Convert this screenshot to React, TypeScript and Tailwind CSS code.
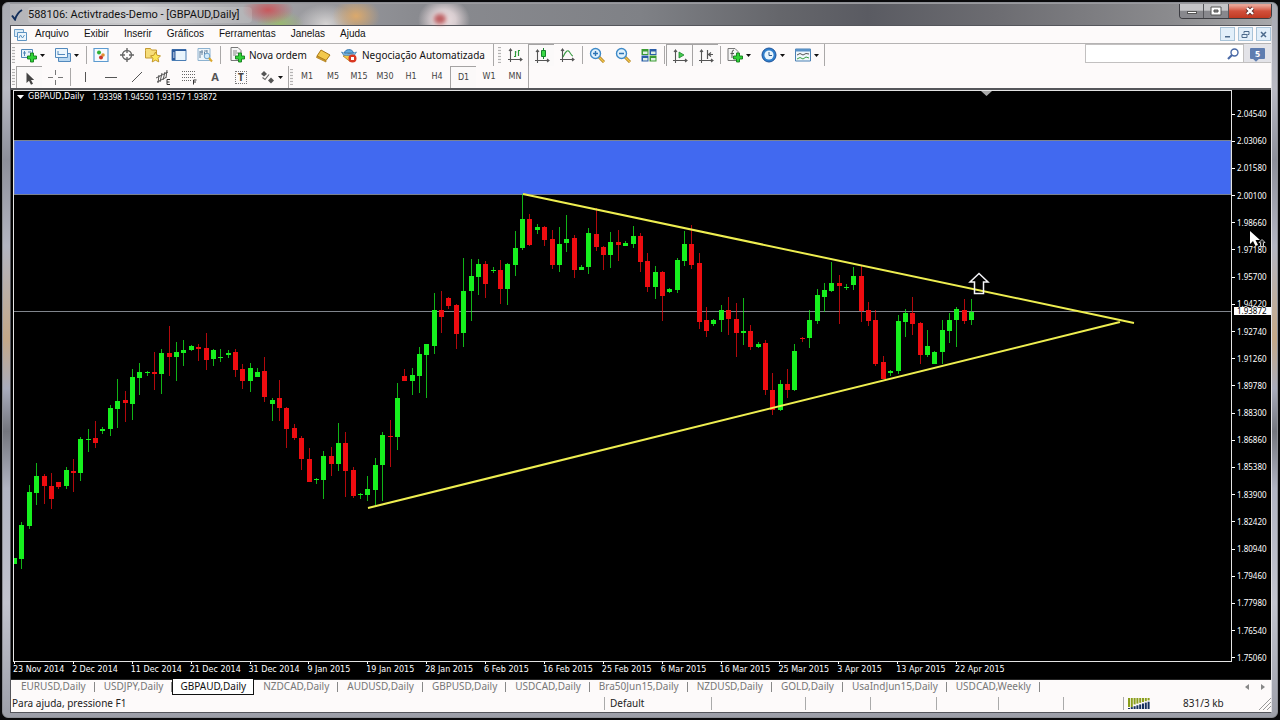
import type { ReactNode } from "react";

type Candle = [number, number, number, number, "g" | "r"];

// high, body top, body bottom, low (plot coordinates)
const candles: Candle[] = [
  [558, 558, 564, 564, "g"], [522, 525, 559, 569, "g"], [485, 492, 526, 529, "g"], [463, 476, 493, 505, "g"],
  [474, 476, 486, 504, "r"], [473, 486, 499, 509, "r"], [482, 482, 487, 489, "r"], [467, 470, 486, 489, "g"],
  [459, 471, 473, 492, "r"], [437, 439, 473, 481, "g"], [429, 439, 440, 452, "g"], [421, 438, 443, 448, "r"],
  [427, 429, 431, 434, "g"], [405, 408, 429, 436, "g"], [379, 401, 409, 428, "g"], [391, 400, 403, 422, "r"],
  [369, 377, 404, 420, "g"], [363, 372, 378, 395, "g"], [371, 372, 373, 376, "g"], [352, 372, 374, 390, "r"],
  [349, 353, 374, 394, "g"], [326, 353, 357, 376, "r"], [342, 352, 357, 381, "g"], [340, 350, 353, 366, "g"],
  [345, 346, 350, 351, "g"], [344, 347, 349, 361, "r"], [333, 348, 360, 370, "r"], [349, 350, 359, 366, "g"],
  [349, 357, 358, 362, "g"], [350, 353, 355, 358, "g"], [349, 352, 370, 377, "r"], [364, 369, 381, 389, "r"],
  [363, 368, 381, 392, "g"], [368, 372, 377, 377, "g"], [357, 371, 397, 402, "r"], [398, 400, 404, 421, "g"],
  [380, 398, 408, 421, "r"], [407, 408, 429, 448, "r"], [424, 428, 438, 440, "r"], [436, 438, 459, 470, "r"],
  [448, 459, 482, 482, "r"], [478, 479, 480, 484, "g"], [451, 456, 480, 499, "g"], [447, 456, 464, 476, "r"],
  [423, 443, 464, 471, "g"], [432, 443, 471, 497, "r"], [467, 470, 496, 498, "r"], [493, 494, 495, 499, "g"],
  [476, 489, 495, 501, "g"], [458, 465, 490, 505, "g"], [432, 435, 465, 501, "g"], [420, 436, 437, 467, "r"],
  [383, 398, 437, 450, "g"], [369, 376, 381, 381, "r"], [368, 375, 381, 395, "g"], [347, 354, 376, 393, "g"],
  [344, 344, 355, 398, "g"], [293, 310, 346, 354, "g"], [291, 310, 317, 333, "r"], [297, 298, 306, 309, "r"],
  [304, 305, 334, 349, "r"], [258, 291, 333, 347, "g"], [259, 276, 291, 321, "g"], [259, 264, 277, 295, "g"],
  [261, 264, 284, 298, "r"], [267, 270, 271, 273, "g"], [260, 270, 289, 304, "r"], [263, 264, 289, 305, "g"],
  [231, 248, 265, 276, "g"], [194, 219, 248, 250, "g"], [214, 219, 245, 246, "r"], [224, 227, 230, 234, "g"],
  [226, 227, 240, 246, "r"], [230, 239, 265, 269, "r"], [227, 244, 265, 272, "g"], [215, 239, 243, 252, "g"],
  [235, 238, 270, 278, "r"], [265, 267, 270, 270, "g"], [228, 233, 267, 274, "g"], [208, 234, 247, 251, "r"],
  [246, 247, 255, 270, "r"], [232, 242, 255, 268, "g"], [230, 242, 245, 261, "r"], [241, 243, 246, 246, "g"],
  [226, 236, 244, 248, "g"], [233, 236, 262, 272, "r"], [253, 261, 287, 292, "r"], [266, 272, 287, 299, "g"],
  [271, 272, 296, 321, "r"], [288, 289, 292, 293, "g"], [258, 260, 290, 293, "g"], [231, 244, 261, 266, "g"],
  [225, 244, 265, 269, "r"], [253, 263, 322, 329, "r"], [307, 320, 331, 337, "r"], [319, 320, 324, 326, "g"],
  [305, 310, 320, 332, "g"], [297, 310, 319, 335, "r"], [303, 319, 333, 357, "r"], [298, 331, 333, 345, "g"],
  [325, 331, 347, 350, "r"], [342, 344, 347, 348, "g"], [340, 343, 390, 395, "r"], [373, 390, 410, 415, "r"],
  [380, 384, 410, 411, "g"], [369, 384, 390, 398, "r"], [344, 351, 390, 391, "g"], [337, 338, 339, 342, "r"],
  [310, 320, 338, 348, "g"], [289, 295, 321, 324, "g"], [283, 290, 297, 312, "g"], [262, 283, 291, 292, "g"],
  [275, 283, 286, 324, "r"], [284, 287, 288, 290, "g"], [267, 276, 285, 290, "g"], [265, 276, 311, 322, "r"],
  [302, 310, 321, 326, "r"], [310, 320, 364, 366, "r"], [356, 362, 379, 379, "r"], [370, 371, 373, 376, "g"],
  [315, 321, 371, 374, "g"], [309, 313, 322, 337, "g"], [297, 313, 324, 335, "r"], [322, 323, 355, 364, "r"],
  [330, 346, 355, 357, "g"], [351, 352, 364, 364, "g"], [320, 330, 352, 364, "g"], [313, 320, 331, 343, "g"],
  [307, 309, 320, 347, "g"], [299, 310, 321, 324, "r"], [299, 312, 320, 325, "g"],
];

const prices = [
  "2.04540", "2.03060", "2.01580", "2.00100", "1.98660", "1.97180", "1.95700", "1.94220", "1.92740", "1.91260",
  "1.89780", "1.88300", "1.86860", "1.85380", "1.83900", "1.82420", "1.80940", "1.79460", "1.77980", "1.76540", "1.75060",
];

const dates = [
  "23 Nov 2014", "2 Dec 2014", "11 Dec 2014", "21 Dec 2014", "31 Dec 2014", "9 Jan 2015", "19 Jan 2015", "28 Jan 2015",
  "6 Feb 2015", "16 Feb 2015", "25 Feb 2015", "6 Mar 2015", "16 Mar 2015", "25 Mar 2015", "3 Apr 2015", "13 Apr 2015", "22 Apr 2015",
];

const menus = ["Arquivo", "Exibir", "Inserir", "Gráficos", "Ferramentas", "Janelas", "Ajuda"];
const timeframes = ["M1", "M5", "M15", "M30", "H1", "H4", "D1", "W1", "MN"];
const tabs = [
  "EURUSD,Daily", "USDJPY,Daily", "GBPAUD,Daily", "NZDCAD,Daily", "AUDUSD,Daily", "GBPUSD,Daily",
  "USDCAD,Daily", "Bra50Jun15,Daily", "NZDUSD,Daily", "GOLD,Daily", "UsaIndJun15,Daily", "USDCAD,Weekly",
];

function Icon({ children }: { children: ReactNode }) {
  return (
    <svg viewBox="0 0 16 16" className="h-4 w-4 shrink-0" fill="none" aria-hidden="true">
      {children}
    </svg>
  );
}

function Caret() {
  return (
    <svg viewBox="0 0 5 3" className="h-[3px] w-[5px] shrink-0" aria-hidden="true">
      <path d="M0 0h5L2.5 3z" fill="#111" />
    </svg>
  );
}

function Plus() {
  return <path d="M9.500 6h3v3h3v3h-3v3h-3v-3h-3V9h3z" fill="#2fd336" stroke="#137a1c" strokeWidth=".9" />;
}

function Axes() {
  return <path d="M3.500 2v13M1 12.500h14M2 4l1.500-2L5 4M13 11l2 1.500-2 1.500" stroke="#555" strokeWidth="1.100" />;
}

function Tool({ label, pressed, children }: { label: string; pressed?: boolean; children: ReactNode }) {
  return (
    <button
      type="button"
      aria-label={label}
      className={`flex h-full w-[26px] shrink-0 items-center justify-center ${
        pressed ? "border-l border-t border-[#a5a3a3] bg-[#fbf9f9]" : ""
      }`}
    >
      {children}
    </button>
  );
}

function DropTool({ label, children }: { label: string; children: ReactNode }) {
  return (
    <button type="button" aria-label={label} className="flex h-full w-[34px] shrink-0 items-center gap-[3px] pl-[5px]">
      <Icon>{children}</Icon>
      <Caret />
    </button>
  );
}

function Sep() {
  return (
    <div className="flex h-full w-1 shrink-0 justify-center py-0.5">
      <div className="w-px bg-[#aaa8a8]" />
    </div>
  );
}

function Grip() {
  return (
    <div className="flex h-full w-[5px] shrink-0 justify-center py-[3px]">
      <div className="w-[3px] bg-[repeating-linear-gradient(#b5b3b3_0px_1px,#f4f2f2_1px_3px)]" />
    </div>
  );
}

function TitleBar() {
  return (
    <header className="flex h-[22px] shrink-0 items-start border-t border-[#9a9a9e] bg-[radial-gradient(ellipse_26px_22px_at_434px_16px,#f0e2e4_0%,#d8cdd0_45%,transparent_100%),radial-gradient(ellipse_26px_14px_at_258px_6px,#c8585c_0%,transparent_100%),radial-gradient(ellipse_24px_14px_at_270px_20px,#9ab872_0%,transparent_100%),radial-gradient(ellipse_24px_18px_at_346px_12px,#dba96c_0%,transparent_100%),radial-gradient(ellipse_30px_20px_at_316px_20px,#d5d3d3_0%,transparent_100%),linear-gradient(90deg,#b4b4b8_0%,#c8c8ca_10%,#a2a2a6_20%,#8a8b90_32%,#7f8186_50%,#65666b_61%,#5a5b62_68%,#6c6c71_78%,#8b8b8e_92%,#a8a8aa_100%)]">
      <div className="flex h-full flex-1 items-center gap-[5px] pl-px">
        <svg viewBox="0 0 12 12" className="h-3 w-3" fill="none" aria-hidden="true">
          <path d="M1 6.500l3 4Q6 4 11 1" stroke="#14305c" strokeWidth="2" />
        </svg>
        <h1 className="w-[224px] rounded bg-white/15 font-['Roboto',sans-serif] text-[11px] leading-4 text-[#111]">
          588106: Activtrades-Demo - [GBPAUD,Daily]
        </h1>
        <div className="ml-[177px] mt-2 h-2.5 w-3 rounded-full bg-[#bd5f62] blur-[2px]" />
      </div>
      <div className="flex h-[15px] overflow-hidden rounded-b border border-t-0 border-[#3d3d42]">
        <button type="button" aria-label="Minimizar" className="flex w-6 items-end justify-center border-r border-[#55555a] bg-linear-to-b from-[#c5c5c8] from-45% to-[#88888d] to-50% pb-1">
          <span className="h-[3px] w-2.5 border border-[#555] bg-white" />
        </button>
        <button type="button" aria-label="Restaurar" className="flex w-[25px] items-center justify-center border-r border-[#55555a] bg-linear-to-b from-[#c5c5c8] from-45% to-[#88888d] to-50%">
          <svg viewBox="0 0 12 10" className="h-2.5 w-3" aria-hidden="true">
            <path d="M1 1h10v8H1z" fill="#fff" stroke="#555" />
            <path d="M4 4h4v2H4z" fill="#888" stroke="#555" />
          </svg>
        </button>
        <button type="button" aria-label="Fechar" className="flex w-[42px] items-center justify-center bg-linear-to-b from-[#e8a294] from-10% via-[#d2503c] via-50% to-[#c03a22]">
          <svg viewBox="0 0 12 10" className="h-2.5 w-3" fill="none" aria-hidden="true">
            <path d="M3 2l6 6M9 2L3 8" stroke="#5b2a28" strokeWidth="4" />
            <path d="M3 2l6 6M9 2L3 8" stroke="#fff" strokeWidth="2.400" />
          </svg>
        </button>
      </div>
    </header>
  );
}

function MenuBar() {
  return (
    <nav className="flex h-[18px] shrink-0 items-center border-b border-[#b5b3b3] pb-px pl-0.5">
      <svg viewBox="0 0 14 13" className="mr-2 h-[13px] w-3.5" fill="none" aria-hidden="true">
        <path d="M1.500 1.500h9v7h-9z" fill="#dcecf8" stroke="#6f9fc8" />
        <path d="M4.500 4.500h9v8h-9z" fill="#eef6fc" stroke="#5d93c2" />
        <path d="M6 10l1.500-3 2 3 2-3" stroke="#5d93c2" />
      </svg>
      <ul className="flex gap-[15px] font-['Liberation_Sans',Arial,sans-serif] text-[10px] leading-4 text-[#111]">
        {menus.map((m) => (
          <li key={m}>
            <button type="button">{m}</button>
          </li>
        ))}
      </ul>
      <div className="ml-auto flex gap-[3px] text-[#4c6a8c]">
        <button type="button" aria-label="Minimizar gráfico" className="flex h-[14px] w-[15px] items-center justify-center border border-[#a8c3d8] bg-[#e2effa]">
          <svg viewBox="0 0 9 9" className="h-[9px] w-[9px]" aria-hidden="true"><path d="M2 6h5v1.500H2z" fill="currentColor" /></svg>
        </button>
        <button type="button" aria-label="Restaurar gráfico" className="flex h-[14px] w-[15px] items-center justify-center border border-[#a8c3d8] bg-[#e2effa]">
          <svg viewBox="0 0 9 9" className="h-[9px] w-[9px]" fill="none" stroke="currentColor" aria-hidden="true"><path d="M3 3.500V1.500h5v3H6.500M1 4.500h5v3H1z" /></svg>
        </button>
        <button type="button" aria-label="Fechar gráfico" className="flex h-[14px] w-[15px] items-center justify-center border border-[#a8c3d8] bg-[#e2effa]">
          <svg viewBox="0 0 9 9" className="h-[9px] w-[9px]" fill="none" stroke="currentColor" strokeWidth="1.500" aria-hidden="true"><path d="M2 2l5 5M7 2L2 7" /></svg>
        </button>
      </div>
    </nav>
  );
}

function MainToolbar() {
  return (
    <div className="flex h-[22px] shrink-0 items-center">
      <Grip />
      <DropTool label="Novo gráfico">
        <path d="M.5 2.500h11v8H.5z" fill="#e8f3fb" stroke="#4f86b8" />
        <path d="M3.500 4v5M2 6h3M7 5h3" stroke="#4f86b8" />
        <Plus />
      </DropTool>
      <DropTool label="Perfis">
        <path d="M3.500 6.500h12v8h-12z" fill="#b9d8f1" stroke="#5289bd" />
        <path d="M.5 1.500h12v9H.5z" fill="#edf6fc" stroke="#5289bd" />
        <path d="M3 4v4M3 7.500h7" stroke="#5289bd" />
      </DropTool>
      <Sep />
      <Tool label="Observação do mercado">
        <Icon>
          <path d="M1 1.500h14v13H1z" fill="#f5fafe" stroke="#5d9bd0" strokeWidth="1.200" />
          <circle cx="6" cy="5.500" r="2" fill="#2eb135" />
          <circle cx="10" cy="8" r="1.800" fill="#e09030" />
          <circle cx="8" cy="10.500" r="2" fill="#cc3a2c" />
        </Icon>
      </Tool>
      <Tool label="Janela de dados">
        <Icon>
          <circle cx="8" cy="8" r="4.500" stroke="#666" strokeWidth="1.400" />
          <path d="M8 1v5M8 10v5M1 8h5M10 8h5" stroke="#666" strokeWidth="1.400" />
        </Icon>
      </Tool>
      <Tool label="Navegador">
        <Icon>
          <path d="M.5 3.500V1.500h5l1 1.500h5v8H.5z" fill="#f6dd7a" stroke="#c49a32" />
          <path d="M10.500 5l1.700 3.300 3.300.5-2.400 2.500.7 3.600-3.300-1.700-3.300 1.700.7-3.600L5.500 8.800l3.300-.5z" fill="#fce65a" stroke="#bd8f22" strokeWidth=".9" />
        </Icon>
      </Tool>
      <Tool label="Terminal">
        <Icon>
          <path d="M1 2.500h14v11H1z" fill="#e9f4fc" stroke="#4a7db4" />
          <path d="M1 2.500h14v1.500H1zM1 4h3.500v9H1z" fill="#2b5a9c" />
          <path d="M2 6h1.500M2 8h1.500M2 10h1.500" stroke="#fff" />
        </Icon>
      </Tool>
      <Tool label="Testador de estratégia">
        <Icon>
          <path d="M1 1.500h12v12H1z" fill="#eef5fa" stroke="#8db2d0" />
          <path d="M3 4v7M5 3v5M7.500 5v4M10 3v5M3 5h3M7 4h3" stroke="#6685a2" />
          <circle cx="10" cy="9" r="2.800" fill="#d5ebfa" stroke="#6ea3cc" />
          <path d="M12 11l3 3.500" stroke="#dba82e" strokeWidth="2" />
        </Icon>
      </Tool>
      <Sep />
      <button type="button" className="flex h-full w-[88px] shrink-0 items-center gap-1 whitespace-nowrap pl-[7px] text-[10px] text-[#111]">
        <Icon>
          <path d="M2 .5h7l3 3v10H2z" fill="#f6f6f6" stroke="#777" />
          <path d="M4 4h4M4 6h6M4 8h3" stroke="#888" />
          <Plus />
        </Icon>
        Nova ordem
      </button>
      <Tool label="MetaEditor">
        <Icon>
          <path d="M6 3l9 5-4 5.500L2 9z" fill="#f3c84c" stroke="#a87716" />
          <path d="M2 9l9 4.500v1.500L1.500 10.500z" fill="#d99f2a" stroke="#a87716" strokeWidth=".7" />
        </Icon>
      </Tool>
      <button type="button" className="flex h-full w-[158px] shrink-0 items-center gap-[5px] whitespace-nowrap border-r border-[#aaa8a8] pl-[5px] text-[10px] text-[#111]">
        <Icon>
          <path d="M2 9l7-3 6 4-6 4.500z" fill="#f2c648" stroke="#b18122" strokeWidth=".8" />
          <path d="M3.500 6C3.500 2 11.500 1 12.500 6z" fill="#64ade0" stroke="#3777ac" />
          <path d="M.5 5q7 4 15 0l-2 3q-6 1-11 0z" fill="#93cbef" stroke="#3777ac" strokeWidth=".7" />
          <circle cx="11.500" cy="11.500" r="4" fill="#d93822" />
          <path d="M10 10h3v3h-3z" fill="#fff" />
        </Icon>
        Negociação Automatizada
      </button>
      <div className="w-[3px]" />
      <Grip />
      <Tool label="Gráfico de barras">
        <Icon>
          <Axes />
          <path d="M8.500 4v6M7 9.500h1.500M11.500 3v6M11.500 3.500H13M8.500 5h1" stroke="#2c9a3a" strokeWidth="1.200" />
        </Icon>
      </Tool>
      <Tool label="Candlesticks" pressed>
        <Icon>
          <Axes />
          <path d="M9.500 0v11" stroke="#16842a" />
          <path d="M7.500 2.500h4v6h-4z" fill="#39d845" stroke="#16842a" />
        </Icon>
      </Tool>
      <Tool label="Gráfico de linha">
        <Icon>
          <Axes />
          <path d="M4 10Q8 1 10.500 5T14 9" stroke="#3c9c46" strokeWidth="1.200" />
        </Icon>
      </Tool>
      <Sep />
      <Tool label="Ampliar">
        <Icon>
          <path d="M10 10l5 5" stroke="#a9781d" strokeWidth="3" />
          <path d="M10 10l5 5" stroke="#f2c64a" strokeWidth="1.500" />
          <circle cx="6.500" cy="6.500" r="5" fill="#e0f1fc" stroke="#3f8ac8" strokeWidth="1.400" />
          <path d="M4 6.500h5M6.500 4v5" stroke="#2d74b4" strokeWidth="1.400" />
        </Icon>
      </Tool>
      <Tool label="Reduzir">
        <Icon>
          <path d="M10 10l5 5" stroke="#a9781d" strokeWidth="3" />
          <path d="M10 10l5 5" stroke="#f2c64a" strokeWidth="1.500" />
          <circle cx="6.500" cy="6.500" r="5" fill="#e0f1fc" stroke="#3f8ac8" strokeWidth="1.400" />
          <path d="M4 6.500h5" stroke="#2d74b4" strokeWidth="1.400" />
        </Icon>
      </Tool>
      <Tool label="Organizar janelas">
        <Icon>
          <path d="M.5 2h7v6h-7zM8.500 8.500h7v6h-7z" fill="#3c9c34" />
          <path d="M8.500 2h7v6h-7zM.5 8.500h7v6h-7z" fill="#2b5ea8" />
          <path d="M2 4.500h4.500v2.500H2zM10 4.500h4.500v2.500H10zM2 11h4.500v2.500H2zM10 11h4.500v2.500H10z" fill="#dff0e4" />
        </Icon>
      </Tool>
      <Sep />
      <Tool label="Rolagem automática" pressed>
        <Icon>
          <Axes />
          <path d="M7 4l5 3-5 3z" fill="#43c94c" stroke="#1f8630" strokeWidth=".8" />
        </Icon>
      </Tool>
      <Tool label="Deslocamento" pressed>
        <Icon>
          <Axes />
          <path d="M9.500 2v9M15 6.500h-4M13 4.500l-2.500 2 2.500 2" stroke="#555" strokeWidth="1.200" />
        </Icon>
      </Tool>
      <Sep />
      <DropTool label="Indicadores">
        <path d="M1 1.500h7l3 3v9H1z" fill="#f4f4f4" stroke="#777" />
        <path d="M7 3Q5 3 5 6v5M3.500 6.500h3.500" stroke="#555" />
        <Plus />
      </DropTool>
      <DropTool label="Períodos">
        <circle cx="8" cy="8" r="7" fill="#2f7fcc" stroke="#1d539a" />
        <circle cx="8" cy="8" r="4.600" fill="#e9f5fd" />
        <path d="M8 5v3.500h3" stroke="#2c5c90" />
      </DropTool>
      <DropTool label="Modelos">
        <path d="M.5 2h15v12H.5z" fill="#f1f8fc" stroke="#4b80b4" />
        <path d="M.5 2h15v2.500H.5z" fill="#5992c8" />
        <path d="M2 8l3-1.500L8 8l3-1.500L14 7" stroke="#555" />
        <path d="M2 12l3-1.500L8 12l3-2 3 1" stroke="#39a044" />
      </DropTool>
      <div className="h-full w-px bg-[#aaa8a8]" />
      <div className="ml-auto flex h-[19px] self-start">
        <label className="flex w-[159px] items-center border border-[#c2c0c0] bg-white">
          <input type="text" aria-label="Pesquisar" className="min-w-0 flex-1 px-1 text-[10px] outline-none" />
          <svg viewBox="0 0 14 14" className="mr-[3px] h-3.5 w-3.5" fill="none" aria-hidden="true">
            <circle cx="8.500" cy="5.500" r="3.500" stroke="#4969a6" strokeWidth="1.400" />
            <path d="M6 8l-4 4" stroke="#4969a6" strokeWidth="2.200" />
          </svg>
        </label>
        <button type="button" aria-label="Mensagens" className="flex w-[27px] items-center justify-center border-b border-[#c2c0c0] bg-[#e3e3e8]">
          <span className="relative rounded-[1px] bg-[#5f7db0] px-[5px] text-[9px] font-bold leading-[11px] text-white">
            5
            <span className="absolute -bottom-0.5 left-1 h-1 w-1 rotate-45 bg-[#5f7db0]" />
          </span>
        </button>
      </div>
    </div>
  );
}

function DrawingToolbar() {
  return (
    <div className="flex h-[22px] shrink-0 items-center">
      <Grip />
      <Tool label="Cursor" pressed>
        <Icon><path d="M4.500 2.500v10.500l2.500-2.300 2 4 2-1-2-3.700h3.200z" fill="#444" /></Icon>
      </Tool>
      <Tool label="Mira">
        <Icon><path d="M8.500 1v5M8.500 11v5M1 8.500h5M11 8.500h5" stroke="#777" /></Icon>
      </Tool>
      <Sep />
      <Tool label="Linha vertical">
        <Icon><path d="M8.500 3v10" stroke="#555" /></Icon>
      </Tool>
      <Tool label="Linha horizontal">
        <Icon><path d="M2 8.500h12" stroke="#555" /></Icon>
      </Tool>
      <Tool label="Linha de tendência">
        <Icon><path d="M3 13L13 3" stroke="#555" /></Icon>
      </Tool>
      <Tool label="Canal equidistante">
        <Icon>
          <path d="M1 9l12-6M2 13l9-4.500M4 6l-1 8M7 4l-2 9M10 3L8 11M12 1l-1 8" stroke="#555" />
          <path d="M15 10.500h-3v5h3M12 13h2.500" stroke="#333" />
        </Icon>
      </Tool>
      <Tool label="Fibonacci">
        <Icon>
          <path d="M1 2.500h14M1 5.500h14M1 8.500h14M1 11.500h9" stroke="#666" strokeDasharray="1 1" />
          <path d="M12.500 15.500v-4.500h3M12.500 13h2.500" stroke="#333" />
        </Icon>
      </Tool>
      <Tool label="Texto">
        <span className="text-[11px] font-bold text-[#555]">A</span>
      </Tool>
      <Tool label="Etiqueta de texto">
        <span className="flex h-[13px] w-3 items-center justify-center border border-dotted border-[#777] text-[10px] font-bold text-[#444]">T</span>
      </Tool>
      <DropTool label="Setas">
        <path d="M5 2l3 3-3 2.500L2 5z" fill="#555" />
        <path d="M12 8.500l3 3-3 3-3-3z" fill="#555" />
        <path d="M3.500 8.500l2.500 2 4-5" stroke="#666" strokeWidth="1.200" />
      </DropTool>
      <div className="h-full w-px bg-[#aaa8a8]" />
      <Grip />
      {timeframes.map((t) => (
        <Tool key={t} label={t} pressed={t === "D1"}>
          <span className="font-['DejaVu_Sans',sans-serif] text-[8px] text-[#444]">{t}</span>
        </Tool>
      ))}
      <div className="h-full w-px bg-[#aaa8a8]" />
    </div>
  );
}

function Plot() {
  return (
    <svg viewBox="13 90 1219 572" preserveAspectRatio="none" className="absolute inset-0 h-full w-full" role="img" aria-label="GBPAUD, Daily">
      <rect x="14" y="140.500" width="1217" height="54" fill="#4169f0" stroke="#7a8290" />
      <path d="M14 311.500h1217" stroke="#80858c" />
      {candles.map(([high, top, bottom, low, side], i) => {
        const x = Math.floor(14.6 + i * 7.362);
        return (
          <g key={i} fill={side === "g" ? "#16f01e" : "#ee0c10"}>
            <rect x={x} y={high} width="1" height={low - high} opacity=".75" />
            <rect x={x - 2} y={top} width="5" height={Math.max(bottom - top, 1)} />
          </g>
        );
      })}
      <path d="M523 194l611 129M368 508l752-186" stroke="#eeee50" strokeWidth="2" fill="none" />
      <path d="M979 273.500l-9 8.500h4.500v11.500h9V282h4.500z" fill="none" stroke="#f4f4f8" strokeWidth="1.500" />
      <path d="M981 91h11l-5.500 5z" fill="#aaa" />
      <rect x="13.500" y="90.500" width="1218" height="571" fill="none" stroke="#e4e4e4" />
    </svg>
  );
}

function Chart() {
  return (
    <main className="flex min-h-0 flex-1 flex-col border-t-2 border-[#55565a] bg-black pl-0.5 text-white">
      <div className="flex min-h-0 flex-1">
        <div className="relative flex-1">
          <Plot />
          <div className="relative flex items-center gap-1 pl-1 pt-[3px] text-[8px] leading-[8px]">
            <svg viewBox="0 0 7 4" className="h-1 w-[7px]" aria-hidden="true"><path d="M0 0h7L3.500 4z" fill="#fff" /></svg>
            <span className="font-['DejaVu_Sans',sans-serif]">GBPAUD,Daily</span>
            <span className="pl-1">1.93398 1.94550 1.93157 1.93872</span>
          </div>
        </div>
        <div className="relative flex w-[39px] shrink-0 flex-col justify-between pt-5 text-[8px] leading-[8px]">
          {prices.map((p) => (
            <div key={p} className="flex items-center gap-0.5">
              <span className="h-px w-[3px] bg-white" />
              {p}
            </div>
          ))}
          <div className="absolute left-0.5 right-0 top-[38%] bg-white pl-[3px] leading-[8px] text-black">1.93872</div>
          <svg viewBox="0 0 18 20" className="absolute left-[17px] top-[24%] mt-[3px] h-5 w-[18px]" aria-hidden="true">
            <path d="M1 1v13l3-3 2.500 5 2.500-1-2.500-5H11z" fill="#fff" />
            <path d="M13 9.500l-3 3h1.500v4h3v-4H16z" fill="#222" stroke="#ccc" />
          </svg>
        </div>
      </div>
      <div className="h-[17px] shrink-0">
        <div className="grid w-[1001px] auto-cols-fr grid-flow-col font-['DejaVu_Sans',sans-serif] text-[8px] leading-[12px]">
          {dates.map((d) => (
            <div key={d} className="whitespace-nowrap">
              <div className="ml-px h-0.5 w-px bg-white" />
              {d}
            </div>
          ))}
        </div>
      </div>
    </main>
  );
}

function ChartTabs() {
  return (
    <div className="flex h-[16px] shrink-0 items-start border-t border-[#222] pl-px text-[10px] leading-[13px] text-[#777]">
      {tabs.map((t) => {
        const active = t === "GBPAUD,Daily";
        return (
          <button
            key={t}
            type="button"
            className={
              active
                ? "-mt-px h-[16px] whitespace-nowrap border border-t-0 border-[#111] bg-white px-[7px] text-[#111]"
                : "flex items-center whitespace-nowrap pl-[9px]"
            }
          >
            {t}
            {!active && <span className="ml-2 h-2.5 w-px bg-[#888]" />}
          </button>
        );
      })}
      <div className="ml-auto flex gap-3 pr-1.5 pt-1">
        <svg viewBox="0 0 4 6" className="h-1.5 w-1" aria-hidden="true"><path d="M4 0v6L0 3z" fill="#888" /></svg>
        <svg viewBox="0 0 4 6" className="h-1.5 w-1" aria-hidden="true"><path d="M0 0v6l4-3z" fill="#888" /></svg>
      </div>
    </div>
  );
}

function StatusBar() {
  return (
    <footer className="flex h-[17px] shrink-0 items-center text-[10px] leading-[13px] text-[#222]">
      <div className="flex-1 pl-px">Para ajuda, pressione F1</div>
      <div className="h-[13px] w-[107px] border-l border-[#aaa] pl-[5px]">Default</div>
      <div className="h-[13px] w-[94px] border-l border-[#aaa]" />
      <div className="h-[13px] w-[65px] border-l border-[#aaa]" />
      <div className="h-[13px] w-[66px] border-l border-[#aaa]" />
      <div className="h-[13px] w-[62px] border-l border-[#aaa]" />
      <div className="h-[13px] w-[65px] border-l border-[#aaa]" />
      <div className="h-[13px] w-[60px] border-l border-[#aaa]" />
      <div className="flex h-[13px] w-[148px] items-center border-l border-[#aaa] pl-1">
        <svg viewBox="0 0 22 11" className="h-[11px] w-[22px]" aria-hidden="true">
          {[0, 1, 2, 3, 4, 5, 6, 7].map((i) => (
            <g key={i}>
              <rect x={i * 2.8} y="0" width="2" height={i < 2 ? 9 : 8 - i * 0.8} fill="#8a9e1c" />
              <rect x={i * 2.8} y={10 - i * 0.9} width="2" height={1 + i * 0.9} fill="#16305e" />
            </g>
          ))}
        </svg>
        <span className="ml-[33px]">831/3 kb</span>
        <svg viewBox="0 0 12 12" className="ml-auto h-3 w-3" fill="none" aria-hidden="true">
          <path d="M0 12L12 0M4 12l8-8M8 12l4-4" stroke="#999" />
        </svg>
      </div>
    </footer>
  );
}

export default function App() {
  return (
    <div className="flex h-screen flex-col bg-[#0a0a0c] p-0.5 font-['Noto_Sans','Open_Sans',sans-serif]">
      <div className="flex min-h-0 flex-1 flex-col overflow-hidden rounded-md border border-[#8e9096] bg-[linear-gradient(#a8aab2_0%,#b9bac4_12%,#8d8f9a_22%,#b3b5c2_34%,#c4a888_47%,#a9acbc_54%,#74767e_60%,#b1b4c2_68%,#c2c4ce_84%,#9d9fa9_100%)] pb-1 pl-[7px] pr-[5px]">
        <TitleBar />
        <div className="flex min-h-0 flex-1 flex-col border border-[#55565c] border-r-[#e0e0e4] bg-[#fdfafa]">
          <MenuBar />
          <MainToolbar />
          <DrawingToolbar />
          <Chart />
          <ChartTabs />
          <StatusBar />
        </div>
      </div>
    </div>
  );
}
